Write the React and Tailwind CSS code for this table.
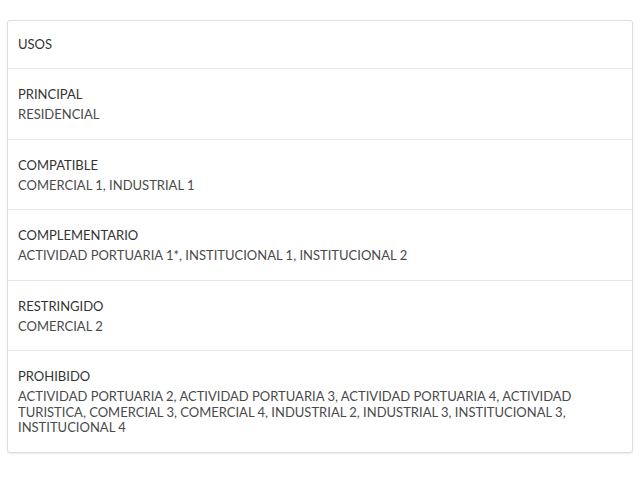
const usos = [
  { title: "PRINCIPAL", value: "RESIDENCIAL" },
  { title: "COMPATIBLE", value: "COMERCIAL 1, INDUSTRIAL 1" },
  {
    title: "COMPLEMENTARIO",
    value: "ACTIVIDAD PORTUARIA 1*, INSTITUCIONAL 1, INSTITUCIONAL 2",
  },
  { title: "RESTRINGIDO", value: "COMERCIAL 2" },
  {
    title: "PROHIBIDO",
    value:
      "ACTIVIDAD PORTUARIA 2, ACTIVIDAD PORTUARIA 3, ACTIVIDAD PORTUARIA 4, ACTIVIDAD TURISTICA, COMERCIAL 3, COMERCIAL 4, INDUSTRIAL 2, INDUSTRIAL 3, INSTITUCIONAL 3, INSTITUCIONAL 4",
  },
];

const App = () => {
  return (
    <div
      className="bg-white min-h-[480px] pt-[20px] px-[7px]"
      style={{ fontFamily: "Lato, 'Open Sans', sans-serif" }}
    >
      <div className="border border-[#dedede] rounded-[3px] shadow-[0_1px_2px_rgba(0,0,0,0.08)] bg-white">
        {/*------------------------ Header --------------------------*/}
        <div className="px-[10px] pt-[13px] pb-[14px] text-[13px] leading-[20px] text-[#333]">
          USOS
        </div>

        {/*------------------------ Usos list --------------------------*/}
        {usos.map((uso) => (
          <div
            key={uso.title}
            className="border-t border-[#e6e6e6] px-[10px] pt-[15px] pb-[16px]"
          >
            <div className="text-[13px] leading-[20px] text-[#333]">
              {uso.title}
            </div>
            <div className="mt-[3px] text-[13px] leading-[15.5px] text-[#4a4a4a]">
              {uso.value}
            </div>
          </div>
        ))}
      </div>
    </div>
  );
};

export default App;
